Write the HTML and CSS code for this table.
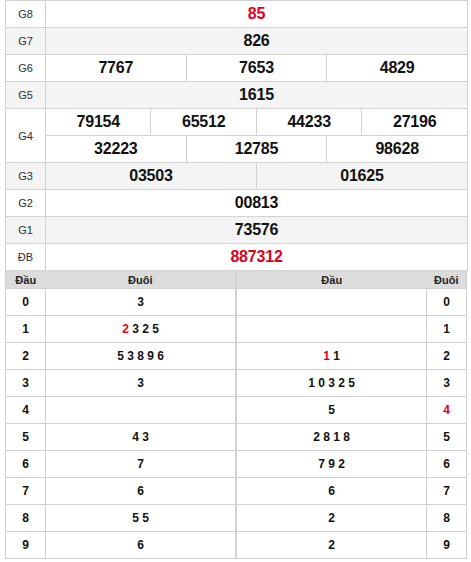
FILE: index.html
```html
<!DOCTYPE html>
<html lang="vi">
<head>
<meta charset="utf-8">
<title>Kết quả xổ số</title>
<link rel="stylesheet" href="styles.css">
</head>
<body>
<div class="wrap">
  <table class="kq">
    <colgroup>
      <col class="c-lbl">
      <col><col><col><col><col><col><col><col><col><col><col><col>
    </colgroup>
    <tbody>
      <tr><td class="lbl">G8</td><td colspan="12" class="num red">85</td></tr>
      <tr class="alt"><td class="lbl">G7</td><td colspan="12" class="num">826</td></tr>
      <tr><td class="lbl">G6</td><td colspan="4" class="num">7767</td><td colspan="4" class="num">7653</td><td colspan="4" class="num">4829</td></tr>
      <tr class="alt"><td class="lbl">G5</td><td colspan="12" class="num">1615</td></tr>
      <tr><td class="lbl" rowspan="2">G4</td><td colspan="3" class="num">79154</td><td colspan="3" class="num">65512</td><td colspan="3" class="num">44233</td><td colspan="3" class="num">27196</td></tr>
      <tr><td colspan="4" class="num">32223</td><td colspan="4" class="num">12785</td><td colspan="4" class="num">98628</td></tr>
      <tr class="alt"><td class="lbl">G3</td><td colspan="6" class="num">03503</td><td colspan="6" class="num">01625</td></tr>
      <tr><td class="lbl">G2</td><td colspan="12" class="num">00813</td></tr>
      <tr class="alt"><td class="lbl">G1</td><td colspan="12" class="num">73576</td></tr>
      <tr><td class="lbl">ĐB</td><td colspan="12" class="num red">887312</td></tr>
    </tbody>
  </table>

  <div class="loto">
    <table class="lt lt-left">
      <colgroup><col class="c-head"><col></colgroup>
      <thead><tr><th>Đầu</th><th>Đuôi</th></tr></thead>
      <tbody>
        <tr><td>0</td><td>3</td></tr>
        <tr><td>1</td><td><span class="red">2</span> 3 2 5</td></tr>
        <tr><td>2</td><td>5 3 8 9 6</td></tr>
        <tr><td>3</td><td>3</td></tr>
        <tr><td>4</td><td></td></tr>
        <tr><td>5</td><td>4 3</td></tr>
        <tr><td>6</td><td>7</td></tr>
        <tr><td>7</td><td>6</td></tr>
        <tr><td>8</td><td>5 5</td></tr>
        <tr><td>9</td><td>6</td></tr>
      </tbody>
    </table>
    <table class="lt lt-right">
      <colgroup><col><col class="c-head"></colgroup>
      <thead><tr><th>Đầu</th><th>Đuôi</th></tr></thead>
      <tbody>
        <tr><td></td><td>0</td></tr>
        <tr><td></td><td>1</td></tr>
        <tr><td><span class="red">1</span> 1</td><td>2</td></tr>
        <tr><td>1 0 3 2 5</td><td>3</td></tr>
        <tr><td>5</td><td class="red">4</td></tr>
        <tr><td>2 8 1 8</td><td>5</td></tr>
        <tr><td>7 9 2</td><td>6</td></tr>
        <tr><td>6</td><td>7</td></tr>
        <tr><td>2</td><td>8</td></tr>
        <tr><td>2</td><td>9</td></tr>
      </tbody>
    </table>
  </div>
</div>
</body>
</html>
```

FILE: styles.css
```css
html, body {
  margin: 0;
  padding: 0;
  background: #fff;
}

body {
  font-family: "Liberation Sans", Arial, sans-serif;
  color: #111;
}

.wrap {
  width: 462px;
  margin-left: 5px;
}

.kq {
  width: 463px;
  border-collapse: collapse;
  table-layout: fixed;
}

.kq .c-lbl {
  width: 40px;
}

.kq td {
  border: 1px solid #d2d2d2;
  height: 26px;
  padding: 0;
  text-align: center;
  vertical-align: middle;
  line-height: 16px;
}

.kq tr.alt td {
  background: #f4f4f4;
}

.kq .lbl {
  font-size: 11px;
  color: #2b2b3a;
  background: #fff;
}

.kq tr.alt .lbl {
  background: #f4f4f4;
}

.kq .num {
  font-size: 16px;
  font-weight: bold;
  color: #111;
  letter-spacing: -0.2px;
}

.red,
.kq .num.red,
.lt td.red {
  color: #e3001b;
}

.loto {
  display: flex;
}

.lt {
  flex: 1 1 0;
  width: 50%;
  border-collapse: collapse;
  table-layout: fixed;
  border: 1px solid #d2d2d2;
  border-top: none;
}

.lt .c-head {
  width: 40px;
}

.lt th {
  background: #dcdcdc;
  height: 17px;
  padding: 0;
  font-size: 11px;
  font-weight: bold;
  color: #222;
  text-align: center;
  vertical-align: middle;
  border: none;
}

.lt td {
  border: 1px solid #d2d2d2;
  height: 26px;
  padding: 0;
  font-size: 12px;
  font-weight: bold;
  text-align: center;
  vertical-align: middle;
  color: #111;
}
```
